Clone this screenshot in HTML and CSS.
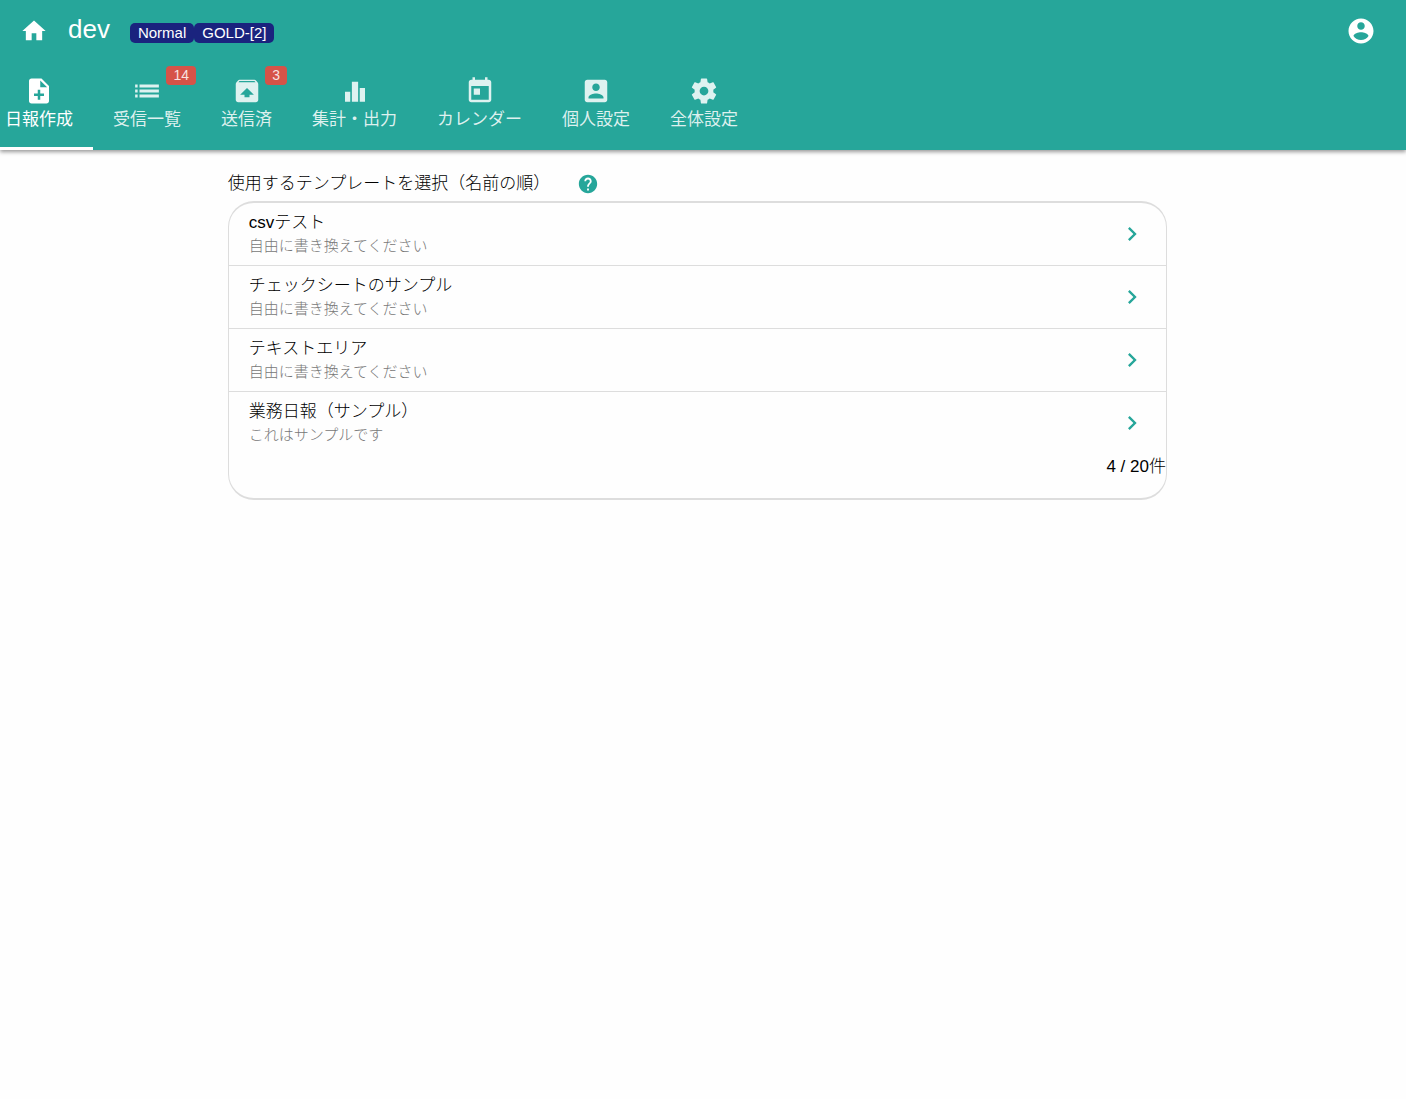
FILE: index.html
```html
<!DOCTYPE html>
<html lang="ja">
<head>
<meta charset="utf-8">
<meta name="viewport" content="width=device-width, initial-scale=1">
<title>日報作成</title>
<link rel="stylesheet" href="styles.css">
</head>
<body>
<header class="header">
  <div class="topbar">
    <a class="home" href="#" aria-label="ホーム"><svg class="icon icon-home" viewBox="0 0 24 24"><path d="M10 20v-6h4v6h5v-8h3L12 3 2 12h3v8z"/></svg></a>
    <a class="brand" href="#">dev</a>
    <div class="plans"><span class="plan">Normal</span><span class="plan">GOLD-[2]</span></div>
    <button class="account" type="button" aria-label="アカウント"><svg class="icon" viewBox="0 0 24 24"><path d="M12 2C6.48 2 2 6.48 2 12s4.480 10 10 10 10-4.480 10-10S17.520 2 12 2zm0 3c1.660 0 3 1.340 3 3s-1.340 3-3 3-3-1.340-3-3 1.340-3 3-3zm0 14.200c-2.500 0-4.710-1.280-6-3.220.030-1.990 4-3.080 6-3.080 1.990 0 5.970 1.090 6 3.080-1.290 1.940-3.500 3.220-6 3.220z"/></svg></button>
  </div>
  <nav class="tabs">
    <a class="tab active" href="#" aria-current="page">
      <svg class="icon" viewBox="0 0 24 24"><path d="M14 2H6c-1.100 0-1.990.9-1.990 2L4 20c0 1.100.89 2 1.990 2H18c1.100 0 2-.9 2-2V8l-6-6zm2 14h-3v3h-2v-3H8v-2h3v-3h2v3h3v2zm-3-7V3.500L18.500 9H13z"/></svg>
      <span>日報作成</span>
    </a>
    <a class="tab" href="#">
      <svg class="icon" viewBox="0 0 24 24"><path d="M2.500 9.200h2V6.700h-2zM2.500 13.200h2v-2.500h-2zM2.500 17.200h2v-2.500h-2zM6 6.700v2.500h15.500V6.700zM6 13.200h15.500v-2.500H6zM6 17.200h15.500v-2.500H6z"/></svg>
      <span>受信一覧</span><span class="count">14</span>
    </a>
    <a class="tab" href="#">
      <svg class="icon" viewBox="0 0 24 24"><path d="M20.550 5.220l-1.390-1.680C18.880 3.210 18.470 3 18 3H6c-.47 0-.88.21-1.150.55L3.460 5.220C3.170 5.570 3 6.010 3 6.500V19c0 1.100.89 2 2 2h14c1.100 0 2-.9 2-2V6.500c0-.49-.17-.93-.45-1.280zM12 9.500l5.500 5.500H14v2h-4v-2H6.500L12 9.500zM5.120 5l.82-1h12l.93 1H5.120z"/></svg>
      <span>送信済</span><span class="count">3</span>
    </a>
    <a class="tab" href="#">
      <svg class="icon" viewBox="0 0 24 24"><path d="M9.500 20.500h5v-16h-5v16zm-5.500 0h4.200v-8H4v8zM15.800 9.500v11H20v-11h-4.200z"/></svg>
      <span>集計・出力</span>
    </a>
    <a class="tab" href="#">
      <svg class="icon" viewBox="0 0 24 24"><path d="M19 3h-1V1h-2v2H8V1H6v2H5c-1.110 0-1.990.9-1.990 2L3 19c0 1.100.89 2 2 2h14c1.100 0 2-.9 2-2V5c0-1.100-.9-2-2-2zm0 16H5V8h14v11zM7 10h5v5H7z"/></svg>
      <span>カレンダー</span>
    </a>
    <a class="tab" href="#">
      <svg class="icon" viewBox="0 0 24 24"><path d="M3 5v14c0 1.100.89 2 2 2h14c1.100 0 2-.9 2-2V5c0-1.100-.9-2-2-2H5c-1.110 0-2 .9-2 2zm12 4c0 1.660-1.340 3-3 3s-3-1.340-3-3 1.340-3 3-3 3 1.340 3 3zm-9 8c0-2 4-3.100 6-3.100s6 1.100 6 3.100v1H6v-1z"/></svg>
      <span>個人設定</span>
    </a>
    <a class="tab" href="#">
      <svg class="icon" viewBox="0 0 24 24"><path d="M19.430 12.980c.04-.32.07-.64.07-.98s-.03-.66-.07-.98l2.110-1.650c.19-.15.24-.42.12-.64l-2-3.460c-.12-.22-.39-.3-.61-.22l-2.490 1c-.52-.4-1.080-.73-1.690-.98l-.38-2.650C14.460 2.180 14.250 2 14 2h-4c-.25 0-.46.18-.49.42l-.38 2.650c-.61.25-1.170.59-1.690.98l-2.490-1c-.23-.09-.49 0-.61.22l-2 3.460c-.13.22-.07.49.12.64l2.110 1.650c-.04.32-.07.65-.07.98s.03.66.07.98l-2.110 1.650c-.19.15-.24.42-.12.64l2 3.460c.12.22.39.3.61.22l2.490-1c.52.4 1.080.73 1.690.98l.38 2.650c.03.24.24.42.49.42h4c.25 0 .46-.18.49-.42l.38-2.650c.61-.25 1.170-.59 1.690-.98l2.490 1c.23.09.49 0 .61-.22l2-3.460c.12-.22.07-.49-.12-.64l-2.110-1.650zM12 15.500c-1.930 0-3.500-1.570-3.500-3.500s1.570-3.500 3.500-3.500 3.500 1.570 3.500 3.500-1.570 3.500-3.500 3.500z"/></svg>
      <span>全体設定</span>
    </a>
  </nav>
</header>
<main class="main">
  <div class="heading">
    <h1 class="title">使用するテンプレートを選択（名前の順）</h1>
    <button class="help" type="button" aria-label="ヘルプ"><svg class="icon icon-help" viewBox="0 0 24 24"><path d="M12 2C6.480 2 2 6.480 2 12s4.480 10 10 10 10-4.480 10-10S17.520 2 12 2zm1 17h-2v-2h2v2zm2.070-7.750l-.9.92C13.450 12.900 13 13.500 13 15h-2v-.5c0-1.100.45-2.100 1.170-2.830l1.240-1.260c.37-.36.59-.86.59-1.410 0-1.100-.9-2-2-2s-2 .9-2 2H8c0-2.210 1.790-4 4-4s4 1.790 4 4c0 .88-.36 1.680-.93 2.250z"/></svg></button>
  </div>
  <div class="panel">
    <ul class="templates">
      <li><a class="template" href="#"><span class="text"><span class="name">csvテスト</span><span class="note">自由に書き換えてください</span></span><svg class="icon icon-next" viewBox="0 0 24 24"><path d="M10 6L8.590 7.410 13.170 12l-4.580 4.590L10 18l6-6z"/></svg></a></li>
      <li><a class="template" href="#"><span class="text"><span class="name">チェックシートのサンプル</span><span class="note">自由に書き換えてください</span></span><svg class="icon icon-next" viewBox="0 0 24 24"><path d="M10 6L8.590 7.410 13.170 12l-4.580 4.590L10 18l6-6z"/></svg></a></li>
      <li><a class="template" href="#"><span class="text"><span class="name">テキストエリア</span><span class="note">自由に書き換えてください</span></span><svg class="icon icon-next" viewBox="0 0 24 24"><path d="M10 6L8.590 7.410 13.170 12l-4.580 4.590L10 18l6-6z"/></svg></a></li>
      <li><a class="template" href="#"><span class="text"><span class="name">業務日報（サンプル）</span><span class="note">これはサンプルです</span></span><svg class="icon icon-next" viewBox="0 0 24 24"><path d="M10 6L8.590 7.410 13.170 12l-4.580 4.590L10 18l6-6z"/></svg></a></li>
    </ul>
    <p class="total">4 / 20件</p>
  </div>
</main>
</body>
</html>
```
FILE: styles.css
```css
* {
  box-sizing: border-box;
}

body {
  margin: 0;
  background: #fefefe;
  color: #000;
  font-family: "Liberation Sans", "Noto Sans CJK JP", sans-serif;
  font-size: 17px;
  font-weight: 300;
  line-height: 23px;
}

a {
  color: inherit;
  text-decoration: none;
}

button {
  padding: 0;
  border: 0;
  background: none;
  color: inherit;
  cursor: pointer;
}

.icon {
  display: block;
  width: 30px;
  height: 30px;
  fill: currentColor;
}

.icon-home {
  width: 28px;
  height: 28px;
}

.icon-help {
  width: 22px;
  height: 22px;
}

.icon-next {
  width: 28px;
  height: 28px;
  color: #26a69a;
}

.header {
  overflow-x: clip;
  background: #26a69a;
  color: #fff;
  box-shadow: 0 2px 4px rgba(0, 0, 0, 0.4);
}

.topbar {
  display: flex;
  align-items: center;
  height: 62px;
  padding: 0 30px 0 20px;
}

.brand {
  margin: 0 20px;
  padding-bottom: 4px;
  font-size: 26px;
  font-weight: 400;
  line-height: 32px;
}

.plans {
  display: flex;
  padding-top: 4px;
}

.plan {
  padding: 0 8px;
  border-radius: 5px;
  background: #1a237e;
  font-size: 15px;
  font-weight: 400;
  line-height: 20px;
}

.account {
  margin-left: auto;
}

/* The strip is scrolled slightly past the start of the first tab. */
.tabs {
  display: flex;
  margin-left: -15px;
}

.tab {
  position: relative;
  display: flex;
  flex: none;
  flex-direction: column;
  align-items: center;
  height: 88px;
  padding: 14px 20px 0;
  border-bottom: 3px solid transparent;
  color: rgba(255, 255, 255, 0.85);
  font-weight: 400;
  line-height: 28px;
}

.tab.active {
  border-color: #fff;
  color: #fff;
}

.count {
  position: absolute;
  top: 4px;
  right: 5px;
  padding: 0 7px;
  border-radius: 4px;
  background: #d65348;
  font-size: 14px;
  line-height: 19px;
}

.main {
  padding: 22px 17% 0 16.2%;
}

.heading {
  display: flex;
  align-items: center;
  gap: 27px;
  margin-bottom: 6px;
}

.title {
  margin: 0;
  font-size: 17px;
  font-weight: 300;
}

.help {
  color: #26a69a;
}

.panel {
  padding-bottom: 19px;
  border: solid #ddd;
  border-width: 2px 1px;
  border-radius: 26px;
}

.templates {
  margin: 0;
  padding: 0;
  list-style: none;
}

.templates li + li {
  border-top: 1px solid #ddd;
}

.template {
  display: flex;
  align-items: center;
  justify-content: space-between;
  padding: 8px 20px;
}

.text {
  display: flex;
  flex-direction: column;
}

.name {
  color: #000;
}

.note {
  color: #777;
  font-size: 15px;
}

.total {
  margin: 0;
  line-height: 25px;
  text-align: right;
}
```
